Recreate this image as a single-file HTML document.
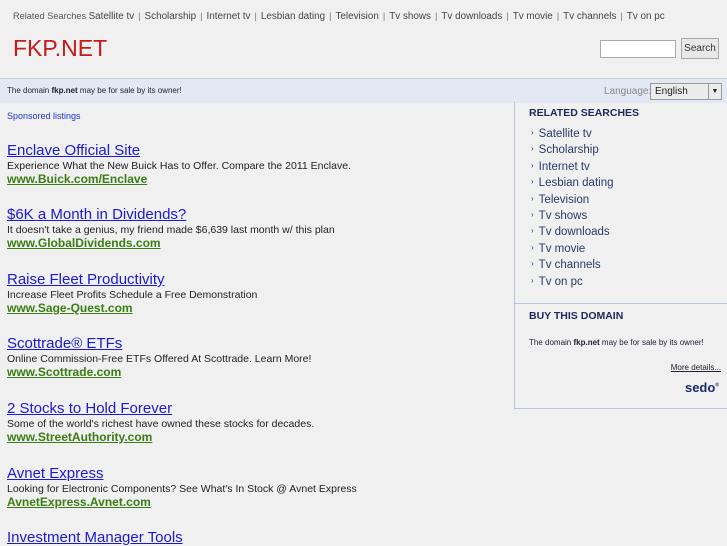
<!DOCTYPE html>
<html><head><meta charset="utf-8"><style>
body{margin:0;width:727px;height:545px;overflow:hidden;background:#f0f0f0;font-family:"Liberation Sans",sans-serif;position:relative}
.a{position:absolute}
#top{left:13px;top:11px;font-size:9.2px;color:#555;white-space:nowrap}
#top span{color:#444;font-size:9.9px}
#top i{font-style:normal;color:#777;margin:0 4px}
#logo{left:13px;top:35px;font-size:23px;color:#c8191a}
#inp{left:600px;top:40px;width:74px;height:16px;border:1px solid #aaa;background:#fff}
#btn{left:681px;top:38px;width:36px;height:19px;border:1px solid #aaa;background:#e8e8e8;font-size:10px;text-align:center;line-height:19px;color:#333}
#band{left:0;top:78px;width:727px;height:24px;background:#e2e8f4;border-top:1px solid #c3cde0}
#band .t{left:7px;top:7px;font-size:8px;color:#223}
#lang{left:604px;top:7px;font-size:10px;color:#888}
#sel{left:650px;top:4px;width:66px;height:15px;border:1px solid #999;background:#ececec;font-size:10px;line-height:15px;padding-left:4px;color:#222}
#side{left:514px;top:102px;width:212px;height:306px;border:1px solid #b8c4dc;border-top:none}
h4{margin:0;font-size:10.5px;color:#1b2a5a;position:absolute;left:14px}
#side ul{position:absolute;left:16px;top:26px;margin:0;padding:0;list-style:none}
#side li{font-size:11.5px;color:#2b3a66;height:16.4px}
#side li:before{content:"›";font-size:8px;margin-right:5px;vertical-align:top}
#spon{left:7px;top:111px;font-size:9px;color:#2233cc}
.ad{position:absolute;left:7px}
.ad .h{font-size:15px;color:#1a1ad0;text-decoration:underline}
.ad .d{font-size:10.5px;color:#222;margin-top:1px}
.ad .u{font-size:12px;color:#3a7d14;font-weight:bold;text-decoration:underline}
</style></head><body>
<div class="a" id="top">Related Searches <span>Satellite tv</span><i>|</i><span>Scholarship</span><i>|</i><span>Internet tv</span><i>|</i><span>Lesbian dating</span><i>|</i><span>Television</span><i>|</i><span>Tv shows</span><i>|</i><span>Tv downloads</span><i>|</i><span>Tv movie</span><i>|</i><span>Tv channels</span><i>|</i><span>Tv on pc</span></div>
<div class="a" id="logo">FKP.NET</div>
<div class="a" id="inp"></div><div class="a" id="btn">Search</div>
<div class="a" id="band"><div class="a t">The domain <b>fkp.net</b> may be for sale by its owner!</div><div class="a" id="lang">Language:</div><div class="a" id="sel">English<span style="position:absolute;right:0;top:0;width:12px;border-left:1px solid #999;text-align:center;font-size:7px">▼</span></div></div>
<div class="a" id="side">
<h4 style="top:5px">RELATED SEARCHES</h4>
<ul><li>Satellite tv</li><li>Scholarship</li><li>Internet tv</li><li>Lesbian dating</li><li>Television</li><li>Tv shows</li><li>Tv downloads</li><li>Tv movie</li><li>Tv channels</li><li>Tv on pc</li></ul>
<div class="a" style="left:0;top:201px;width:212px;border-top:1px solid #b8c4dc"></div>
<h4 style="top:208px">BUY THIS DOMAIN</h4>
<div class="a" style="left:14px;top:236px;font-size:8px;color:#223">The domain <b>fkp.net</b> may be for sale by its owner!</div>
<div class="a" style="right:6px;top:261px;font-size:8px;color:#223;text-decoration:underline">More details...</div>
<div class="a" style="right:8px;top:278px;font-size:13px;font-weight:bold;color:#1b2a6a">sedo<sup style="font-size:5px">®</sup></div>
</div>
<div class="a" id="spon">Sponsored listings</div>
<div class="ad" style="top:142px"><div class="h">Enclave Official Site</div><div class="d">Experience What the New Buick Has to Offer. Compare the 2011 Enclave.</div><div class="u">www.Buick.com/Enclave</div></div>
<div class="ad" style="top:206px"><div class="h">$6K a Month in Dividends?</div><div class="d">It doesn't take a genius, my friend made $6,639 last month w/ this plan</div><div class="u">www.GlobalDividends.com</div></div>
<div class="ad" style="top:271px"><div class="h">Raise Fleet Productivity</div><div class="d">Increase Fleet Profits Schedule a Free Demonstration</div><div class="u">www.Sage-Quest.com</div></div>
<div class="ad" style="top:335px"><div class="h">Scottrade® ETFs</div><div class="d">Online Commission-Free ETFs Offered At Scottrade. Learn More!</div><div class="u">www.Scottrade.com</div></div>
<div class="ad" style="top:400px"><div class="h">2 Stocks to Hold Forever</div><div class="d">Some of the world's richest have owned these stocks for decades.</div><div class="u">www.StreetAuthority.com</div></div>
<div class="ad" style="top:465px"><div class="h">Avnet Express</div><div class="d">Looking for Electronic Components? See What's In Stock @ Avnet Express</div><div class="u">AvnetExpress.Avnet.com</div></div>
<div class="ad" style="top:529px"><div class="h">Investment Manager Tools</div></div>
</body></html>
